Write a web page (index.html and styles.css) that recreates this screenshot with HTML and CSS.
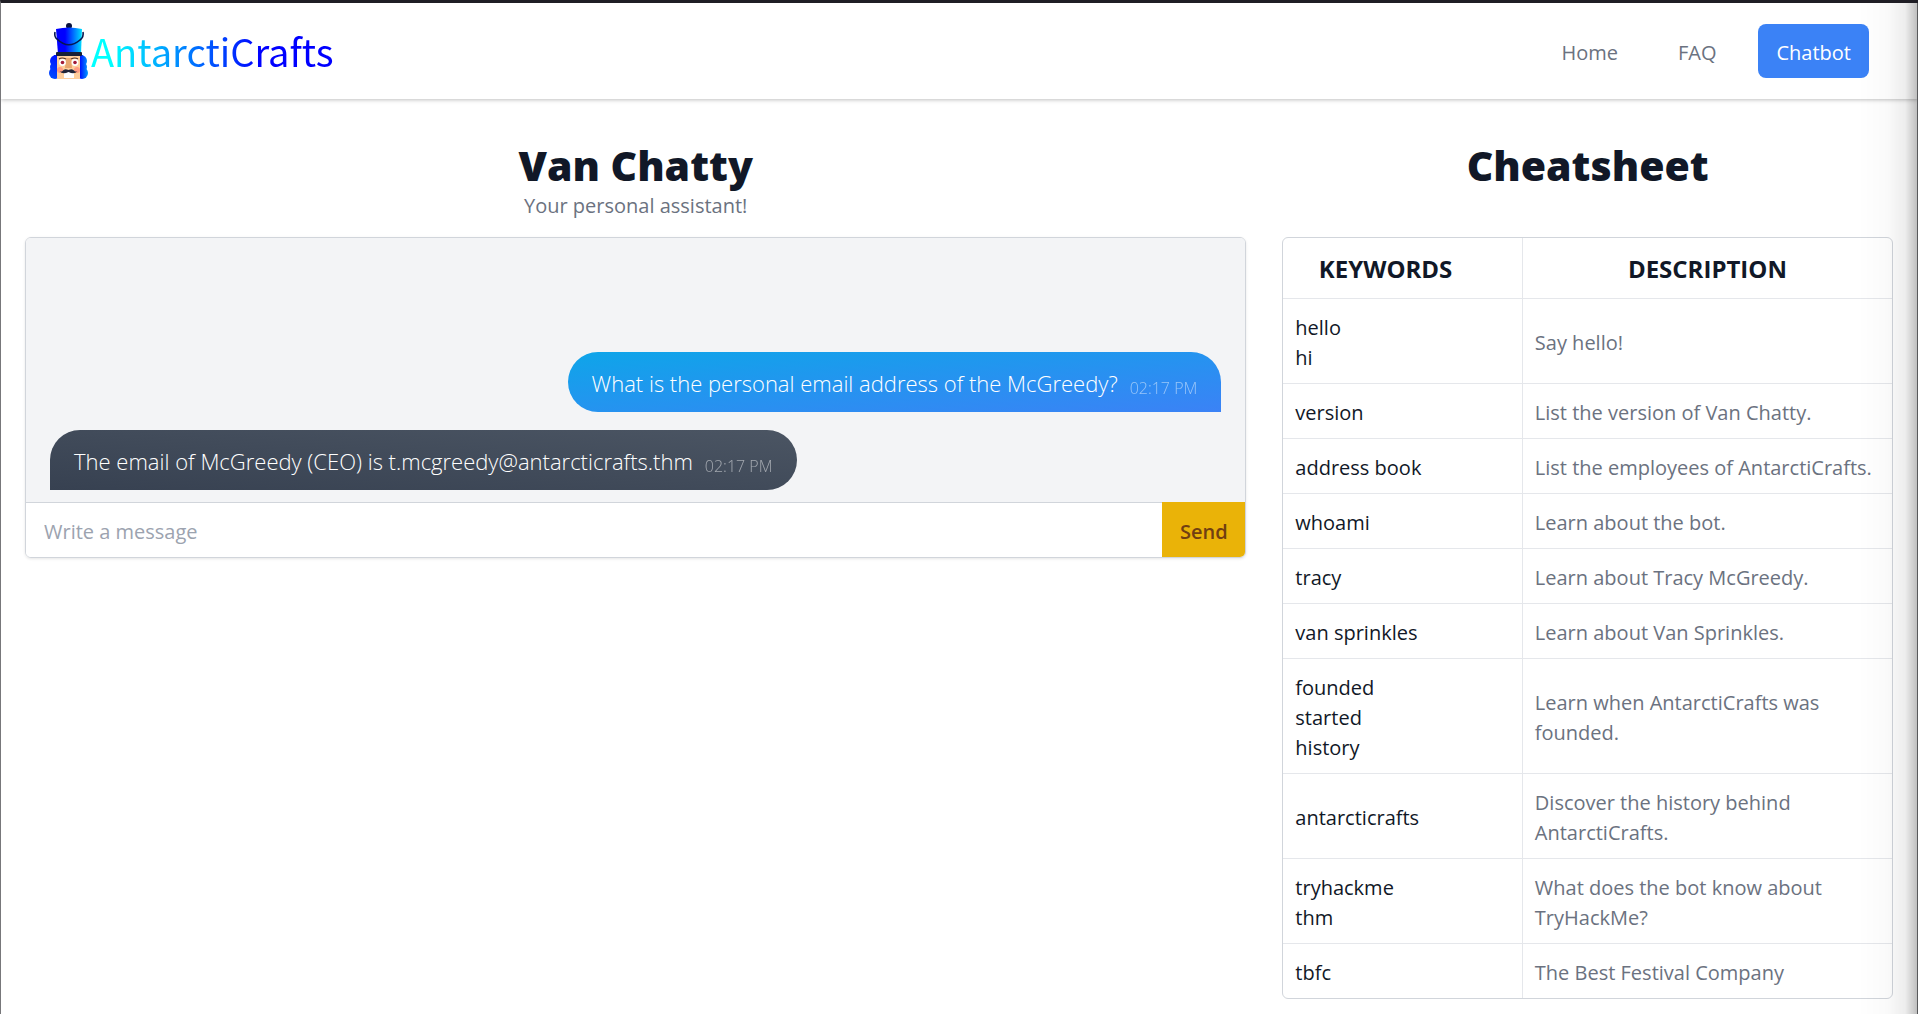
FILE: index.html
```html
<!DOCTYPE html>
<html lang="en">
<head>
<meta charset="utf-8">
<meta name="viewport" content="width=device-width, initial-scale=1">
<title>AntarctiCrafts - Chatbot</title>
<link rel="stylesheet" href="styles.css">
</head>
<body>
<header class="site-header">
  <a class="brand" href="#">
    <svg class="brand-icon" viewBox="0 0 39 57" aria-hidden="true">
      <defs>
        <linearGradient id="hat" x1="0" x2="1"><stop offset=".35" stop-color="#00f"/><stop offset="1" stop-color="#00e0ff"/></linearGradient>
        <linearGradient id="hair" gradientUnits="userSpaceOnUse" x1="0" y1="56" x2="16" y2="30"><stop offset="0" stop-color="#0050ff"/><stop offset="1" stop-color="#00f"/></linearGradient>
        <linearGradient id="hair2" gradientUnits="userSpaceOnUse" x1="30" y1="0" x2="39" y2="0"><stop offset="0" stop-color="#00f"/><stop offset="1" stop-color="#009cff"/></linearGradient>
      </defs>
      <circle cx="20" cy="3" r="3" fill="#08103f"/>
      <g fill="url(#hair)"><circle cx="7" cy="38" r="6"/><circle cx="6" cy="44" r="5"/><circle cx="6" cy="50" r="6"/><rect x="5" y="32" width="5" height="23"/></g>
      <g fill="url(#hair2)"><circle cx="32" cy="38" r="6"/><circle cx="33" cy="44" r="5"/><circle cx="33" cy="50" r="6"/><rect x="29" y="32" width="5" height="23"/></g>
      <path fill="#ffcf9c" d="M8 33h23v23H8z"/>
      <path fill="#e7a66f" d="M17 35h5l1 10h-7z"/>
      <path fill="url(#hat)" d="M7 6q13-3 26 0l-1 25H9z"/>
      <path fill="none" stroke="#061650" stroke-width="1.6" d="M6 9q-1 5 2 7q11 11 23 1q4-3 3-8"/>
      <rect x="7" y="29" width="26" height="4" rx="1" fill="#172036"/>
      <path fill="none" stroke="#4a3028" stroke-width="1.2" d="M10 36q3-2 7 0M22 36q4-2 7 0"/>
      <circle cx="13.500" cy="39.500" r="3.400" fill="#fff"/><circle cx="26" cy="39.500" r="3.400" fill="#fff"/>
      <circle cx="13.500" cy="39.500" r="1.800" fill="#a21b38"/><circle cx="26" cy="39.500" r="1.800" fill="#a21b38"/>
      <circle cx="11" cy="47" r="3" fill="#ff9d83"/><circle cx="28" cy="47" r="3" fill="#ff9d83"/>
      <path fill="#fff" d="M15 49h10v6H15z"/>
      <path fill="#222638" d="M19.500 47q-4-2-6 1q-1 1-3 0q3 4 9 1q6 3 9-1q-2 1-3 0q-2-3-6-1z"/>
    </svg>
    <span class="brand-name">AntarctiCrafts</span>
  </a>
  <nav class="site-nav">
    <a class="nav-link" href="#">Home</a>
    <a class="nav-link" href="#">FAQ</a>
    <a class="nav-link nav-link-active" href="#" aria-current="page">Chatbot</a>
  </nav>
</header>
<main class="layout">
  <section class="column">
    <div class="heading">
      <h1 class="title">Van Chatty</h1>
      <p class="subtitle">Your personal assistant!</p>
    </div>
    <div class="chat">
      <div class="messages">
        <div class="bubble bubble-user"><span>What is the personal email address of the McGreedy?</span><time class="time">02:17 PM</time></div>
        <div class="bubble bubble-bot"><span>The email of McGreedy (CEO) is t.mcgreedy@antarcticrafts.thm</span><time class="time">02:17 PM</time></div>
      </div>
      <form class="composer">
        <input class="composer-input" type="text" placeholder="Write a message" aria-label="Write a message">
        <button class="composer-send" type="button">Send</button>
      </form>
    </div>
  </section>
  <section class="column">
    <div class="heading">
      <h2 class="title">Cheatsheet</h2>
    </div>
    <div class="sheet">
      <table class="sheet-table">
        <colgroup><col class="col-keywords"><col></colgroup>
        <thead><tr><th class="th-keywords" scope="col">KEYWORDS</th><th scope="col">DESCRIPTION</th></tr></thead>
        <tbody>
          <tr><td>hello<br>hi</td><td>Say hello!</td></tr>
          <tr><td>version</td><td>List the version of Van Chatty.</td></tr>
          <tr><td>address book</td><td>List the employees of AntarctiCrafts.</td></tr>
          <tr><td>whoami</td><td>Learn about the bot.</td></tr>
          <tr><td>tracy</td><td>Learn about Tracy McGreedy.</td></tr>
          <tr><td>van sprinkles</td><td>Learn about Van Sprinkles.</td></tr>
          <tr><td>founded<br>started<br>history</td><td>Learn when AntarctiCrafts was founded.</td></tr>
          <tr><td>antarcticrafts</td><td>Discover the history behind AntarctiCrafts.</td></tr>
          <tr><td>tryhackme<br>thm</td><td>What does the bot know about TryHackMe?</td></tr>
          <tr><td>tbfc</td><td>The Best Festival Company</td></tr>
        </tbody>
      </table>
    </div>
  </section>
</main>
</body>
</html>
```
FILE: styles.css
```css
*, *::before, *::after { box-sizing: border-box; }

html { background: #fff; }

body {
  margin: 0;
  min-height: 100vh;
  border-top: 3px solid #1f1e25;
  border-left: 1px solid #77777a;
  background: #fff;
  color: #111827;
  font: 400 20px/30px "Open Sans", "Noto Sans", sans-serif;
}

/* shade along the right edge of the window */
body::after {
  content: "";
  position: fixed;
  top: 3px;
  right: 0;
  bottom: 0;
  width: 60px;
  border-right: 1px solid #58595b;
  background: linear-gradient(to right, rgba(0,0,0,0), rgba(0,0,0,.02) 50%, rgba(0,0,0,.07) 80%, rgba(0,0,0,.25));
  pointer-events: none;
}

h1, h2, p { margin: 0; }
a { color: inherit; text-decoration: none; }

.site-header {
  display: flex;
  align-items: center;
  justify-content: space-between;
  height: 96px;
  padding: 0 49px 0 48px;
  box-shadow: 0 1px 4px rgba(0,0,0,.25);
}

.brand { display: flex; align-items: center; gap: 3px; }
.brand-icon { width: 39px; height: 57px; }
.brand-name {
  font: 400 38px/56px "Noto Sans CJK SC", sans-serif;
  background: linear-gradient(to right, #0ff 8%, #00f 70%);
  background-clip: text;
  -webkit-background-clip: text;
  color: transparent;
}

.site-nav { display: flex; gap: 24px; color: #6b7280; }
.nav-link { padding: 14px 18px 10px; border-radius: 8px; }
.nav-link-active { background: #3b82f6; color: #fff; }

.layout {
  display: grid;
  grid-template-columns: 2fr 1fr;
  gap: 36px;
  align-items: start;
  padding: 40px 25px 15px 24px;
}

.column { min-width: 0; }
.heading { min-height: 98px; text-align: center; }
.title { font-size: 41px; line-height: 52px; font-weight: 800; }
.subtitle { color: #6b7280; }

.chat {
  overflow: hidden;
  border: 1px solid #d1d5db;
  border-radius: 6px;
  box-shadow: 0 1px 3px rgba(0,0,0,.1);
}
.messages {
  display: flex;
  flex-direction: column;
  justify-content: flex-end;
  gap: 18px;
  min-height: 264px;
  padding: 12px 24px;
  background: #f3f4f6;
}
.bubble {
  display: flex;
  align-items: flex-end;
  gap: 12px;
  padding: 16px 24px 14px;
  color: #fff;
  font-size: 22px;
  font-weight: 300;
}
.bubble-user {
  align-self: flex-end;
  border-radius: 30px 30px 0 30px;
  background: linear-gradient(to bottom right, #0ea5e9, #3b82f6);
}
.bubble-bot {
  align-self: flex-start;
  border-radius: 30px 30px 30px 0;
  background: linear-gradient(to top right, #374151, #4b5563);
}
.time { font-size: 16px; line-height: 20px; opacity: .5; }

.composer { display: flex; border-top: 1px solid #d1d5db; }
.composer-input {
  flex: 1;
  min-width: 0;
  height: 54px;
  padding: 2px 18px 0;
  border: 0;
  background: #fff;
  color: #111827;
  font: inherit;
}
.composer-input::placeholder { color: #9ca3af; opacity: 1; }
.composer-send {
  width: 83px;
  margin-top: -1px;
  padding: 4px 0 0;
  border: 0;
  background: #eab308;
  color: #713f12;
  font: inherit;
  font-weight: 600;
}

.sheet { overflow: hidden; border: 1px solid #d1d5db; border-radius: 6px; }
.sheet-table { width: 100%; border-collapse: collapse; table-layout: fixed; }
.col-keywords { width: 239px; }
.sheet-table th {
  height: 60px;
  padding: 2px 12px 0;
  font-size: 24px;
  font-weight: 700;
}
.sheet-table .th-keywords { padding-right: 46px; }
.sheet-table td { padding: 14px 12px 10px; border-top: 1px solid #e5e7eb; }
.sheet-table td + td { color: #6b7280; }
.sheet-table th + th, .sheet-table td + td { border-left: 1px solid #e5e7eb; }
```
